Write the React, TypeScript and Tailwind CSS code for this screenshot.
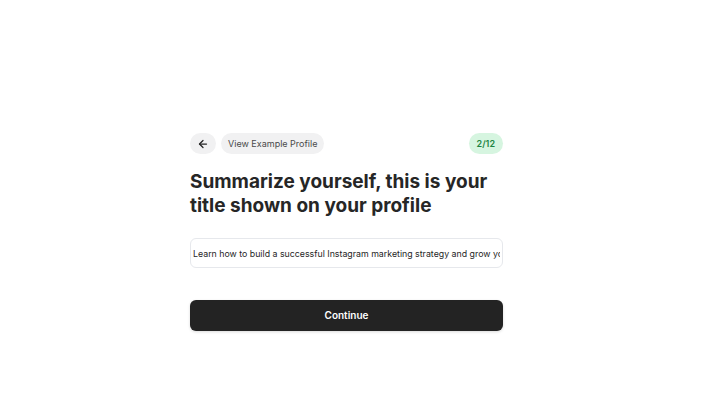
import { ArrowLeft } from 'lucide-react';

export default function App() {
  return (
    <div className="min-h-[417px] w-full bg-white font-['Inter',sans-serif] text-[#262626]">
      <div className="ml-[190px] flex w-[313px] flex-col pt-[133px]">
        {/* Header row */}
        <div className="flex items-center justify-between">
          <div className="flex items-center gap-[5px]">
            <button className="flex h-[21px] w-[26px] items-center justify-center rounded-full bg-[#f1f1f2] text-[#262626]">
              <ArrowLeft className="h-[12px] w-[12px]" strokeWidth={2.5} />
            </button>
            <button className="flex h-[21px] items-center rounded-full bg-[#f1f1f2] px-[7px] text-[9px] font-normal text-[#4a4a4a]">
              View Example Profile
            </button>
          </div>
          <span className="flex h-[21px] items-center rounded-full bg-[#d6f5e0] px-[8px] text-[9px] font-semibold text-[#1d8442]">
            2/12
          </span>
        </div>

        {/* Title */}
        <h1 className="mt-[16px] text-[19px] font-bold leading-[24px] text-[#262626]">
          Summarize yourself, this is your title shown on your profile
        </h1>

        {/* Input */}
        <input
          type="text"
          readOnly
          value="Learn how to build a successful Instagram marketing strategy and grow your audience"
          className="mt-[20px] h-[30px] w-full rounded-[6px] border border-[#e6e8ec] bg-white px-[2px] text-[8.8px] text-[#262626] outline-none"
        />

        {/* Continue */}
        <button className="mt-[32px] h-[31px] w-full rounded-[6px] bg-[#232323] text-[10px] font-semibold text-white shadow-[0_1px_3px_rgba(0,0,0,0.15)]">
          Continue
        </button>
      </div>
    </div>
  );
}
